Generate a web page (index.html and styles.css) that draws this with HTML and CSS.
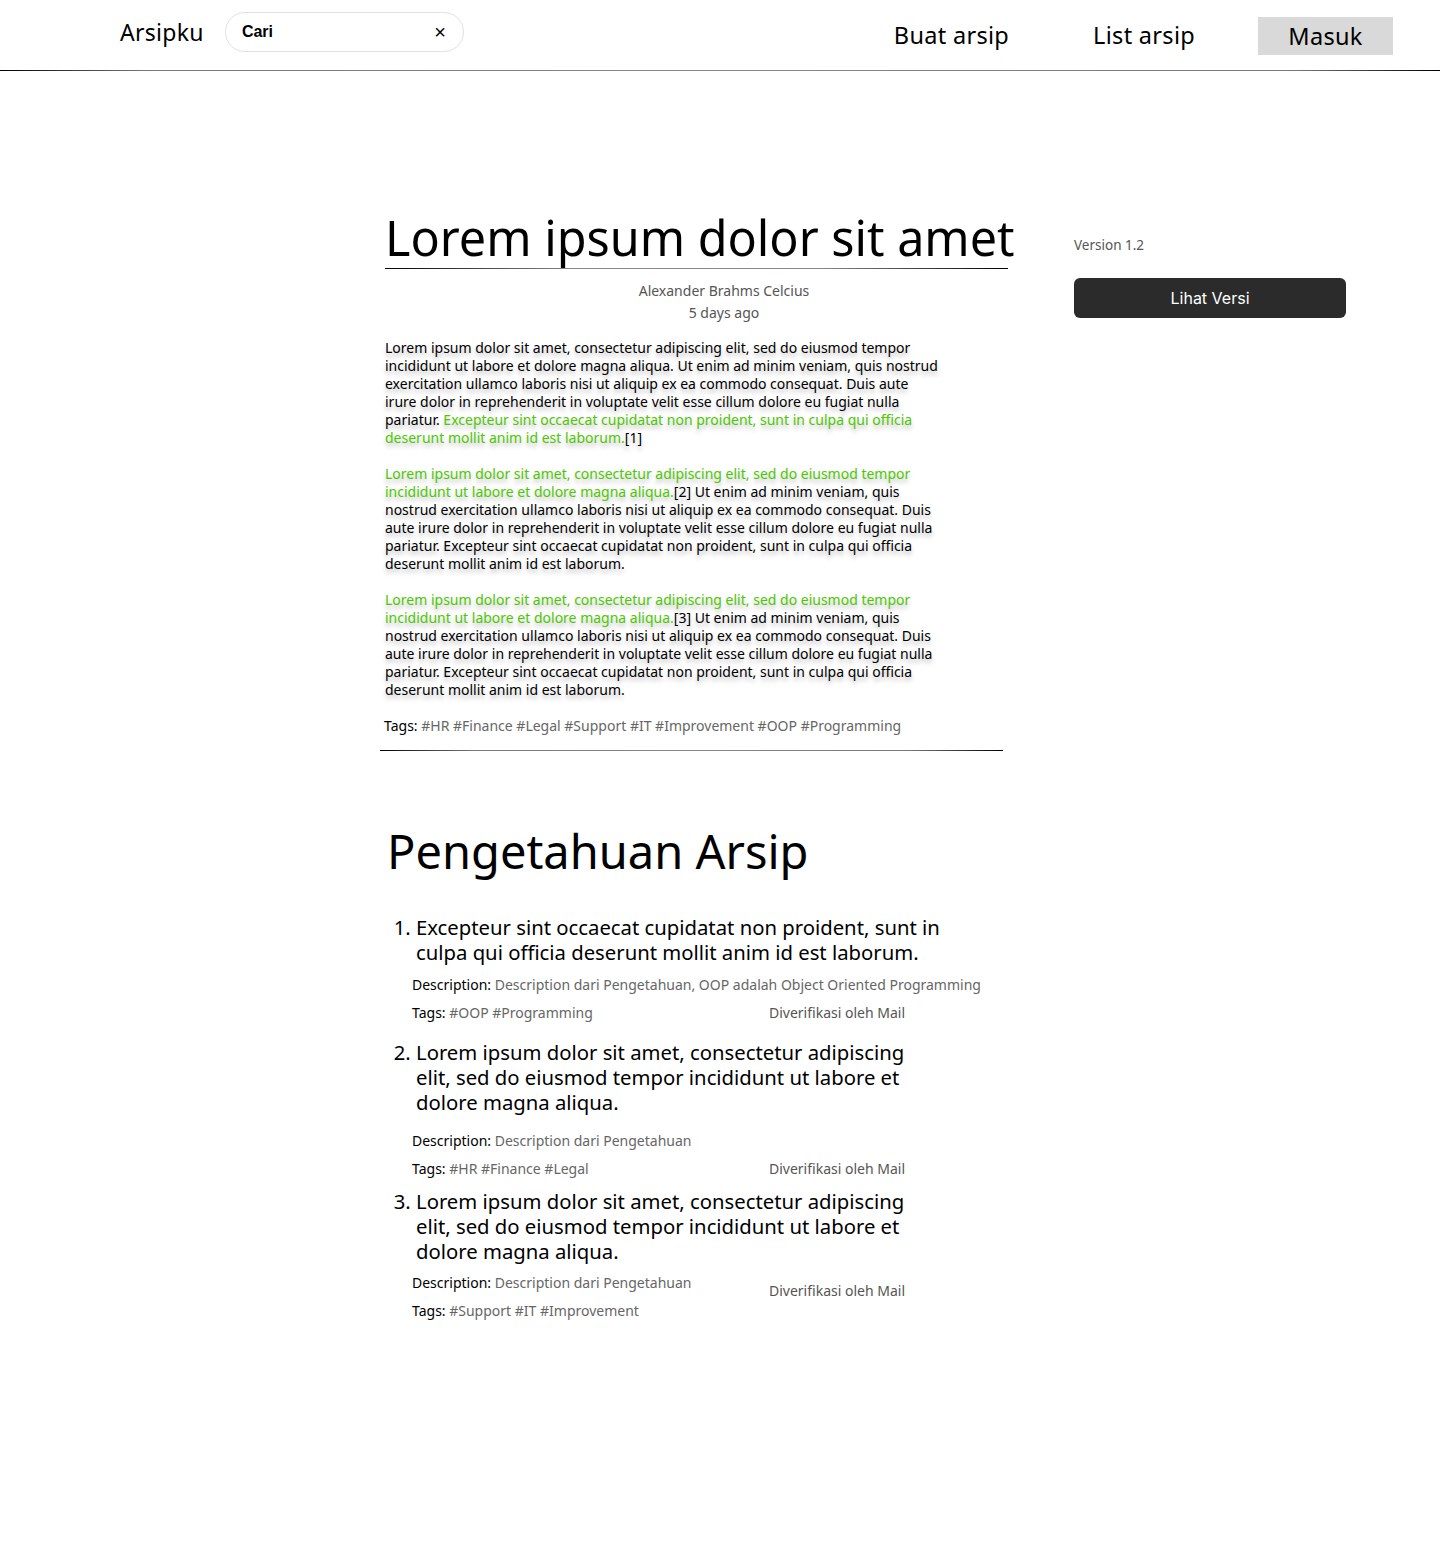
FILE: index.html
```html
<!DOCTYPE html>
<html lang="id">
<head>
<meta charset="utf-8">
<title>Arsipku</title>
<link rel="stylesheet" href="styles.css">
</head>
<body>
<header class="topbar">
  <div class="brand-group">
    <span class="brand">Arsipku</span>
    <div class="search">
      <span class="search-text">Cari</span>
      <span class="search-clear">×</span>
    </div>
  </div>
  <nav class="nav">
    <a class="nav-link">Buat arsip</a>
    <a class="nav-link">List arsip</a>
    <a class="nav-btn">Masuk</a>
  </nav>
</header>

<main class="page">
  <article class="article">
    <h1 class="title">Lorem ipsum dolor sit amet</h1>
    <div class="meta">
      <div>Alexander Brahms Celcius</div>
      <div>5 days ago</div>
    </div>
    <div class="body">
      <p>Lorem ipsum dolor sit amet, consectetur adipiscing elit, sed do eiusmod tempor incididunt ut labore et dolore magna aliqua. Ut enim ad minim veniam, quis nostrud exercitation ullamco laboris nisi ut aliquip ex ea commodo consequat. Duis aute irure dolor in reprehenderit in voluptate velit esse cillum dolore eu fugiat nulla pariatur. <span class="hl">Excepteur sint occaecat cupidatat non proident, sunt in culpa qui officia deserunt mollit anim id est laborum.</span>[1]</p>
      <p><span class="hl">Lorem ipsum dolor sit amet, consectetur adipiscing elit, sed do eiusmod tempor incididunt ut labore et dolore magna aliqua.</span>[2] Ut enim ad minim veniam, quis nostrud exercitation ullamco laboris nisi ut aliquip ex ea commodo consequat. Duis aute irure dolor in reprehenderit in voluptate velit esse cillum dolore eu fugiat nulla pariatur. Excepteur sint occaecat cupidatat non proident, sunt in culpa qui officia deserunt mollit anim id est laborum.</p>
      <p><span class="hl">Lorem ipsum dolor sit amet, consectetur adipiscing elit, sed do eiusmod tempor incididunt ut labore et dolore magna aliqua.</span>[3] Ut enim ad minim veniam, quis nostrud exercitation ullamco laboris nisi ut aliquip ex ea commodo consequat. Duis aute irure dolor in reprehenderit in voluptate velit esse cillum dolore eu fugiat nulla pariatur. Excepteur sint occaecat cupidatat non proident, sunt in culpa qui officia deserunt mollit anim id est laborum.</p>
    </div>
    <div class="tags">Tags: <span class="muted">#HR #Finance #Legal #Support #IT #Improvement #OOP #Programming</span></div>
    <div class="rule"></div>

    <section class="knowledge">
      <h2 class="k-title">Pengetahuan Arsip</h2>
      <ol class="k-list">
        <li class="k-item first">
          <div class="k-text">Excepteur sint occaecat cupidatat non proident, sunt in culpa qui officia deserunt mollit anim id est laborum.</div>
          <div class="k-desc">Description: <span class="muted">Description dari Pengetahuan, OOP adalah Object Oriented Programming</span></div>
          <div class="k-row">
            <span class="k-tags">Tags: <span class="muted">#OOP #Programming</span></span>
            <span class="k-ver">Diverifikasi oleh Mail</span>
          </div>
        </li>
        <li class="k-item second">
          <div class="k-text narrow">Lorem ipsum dolor sit amet, consectetur adipiscing elit, sed do eiusmod tempor incididunt ut labore et dolore magna aliqua.</div>
          <div class="k-desc spaced">Description: <span class="muted">Description dari Pengetahuan</span></div>
          <div class="k-row">
            <span class="k-tags">Tags: <span class="muted">#HR #Finance #Legal</span></span>
            <span class="k-ver">Diverifikasi oleh Mail</span>
          </div>
        </li>
        <li class="k-item">
          <div class="k-text narrow">Lorem ipsum dolor sit amet, consectetur adipiscing elit, sed do eiusmod tempor incididunt ut labore et dolore magna aliqua.</div>
          <div class="k-split">
            <div class="k-left">
              <div class="k-desc">Description: <span class="muted">Description dari Pengetahuan</span></div>
              <div class="k-tags">Tags: <span class="muted">#Support #IT #Improvement</span></div>
            </div>
            <span class="k-ver mid">Diverifikasi oleh Mail</span>
          </div>
        </li>
      </ol>
    </section>
  </article>

  <aside class="side">
    <div class="version">Version 1.2</div>
    <button class="btn-dark">Lihat Versi</button>
  </aside>
</main>
</body>
</html>
```

FILE: styles.css
```css
* { box-sizing: border-box; }
html, body { margin: 0; padding: 0; background: #fff; }
body {
  font-family: "Noto Sans", "DejaVu Sans", sans-serif;
  color: #000;
  width: 1440px;
  min-height: 1559px;
}

.topbar {
  height: 71px;
  display: flex;
  align-items: flex-start;
  justify-content: space-between;
  padding: 0 47px 0 120px;
  position: relative;
}
.topbar::after {
  content: "";
  position: absolute;
  left: 0; right: 0; bottom: 0;
  height: 1px;
  background: linear-gradient(90deg, #000 0%, #777 10%, #888 50%, #777 90%, #000 100%);
}
.brand-group { display: flex; align-items: center; gap: 21px; height: 64px; }
.brand { font-size: 23px; letter-spacing: 0.3px; }
.search {
  width: 239px;
  height: 40px;
  border: 1px solid #e1e1e1;
  border-radius: 20px;
  display: flex;
  align-items: center;
  justify-content: space-between;
  padding: 0 17px 0 16px;
}
.search-text { font-family: "Liberation Sans", Arial, sans-serif; font-weight: 700; font-size: 16px; }
.search-clear { font-family: "Liberation Sans", Arial, sans-serif; font-size: 20px; line-height: 1; }

.nav { display: flex; align-items: center; height: 70px; }
.nav-link { font-size: 23.5px; letter-spacing: 0.3px; }
.nav-link:first-child { margin-right: 84px; }
.nav-link:nth-child(2) { margin-right: 63px; }
.nav-btn {
  font-size: 23.5px;
  background: #d9d9d9;
  width: 135px;
  height: 38px;
  display: flex;
  align-items: center;
  justify-content: center;
  margin-top: 2px;
  letter-spacing: 0.3px;
}

.page {
  display: flex;
  align-items: flex-start;
  padding-left: 380px;
  padding-top: 137px;
}
.article { width: 628px; }
.title {
  font-size: 48.5px;
  font-weight: 400;
  margin: 0 0 0 5px;
  line-height: 58px;
  padding-bottom: 2px;
  border-bottom: 1px solid #000;
  border-image: linear-gradient(90deg, #000 0%, #888 30%, #888 70%, #000 100%) 1;
  width: 623px;
  white-space: nowrap;
}
.meta {
  text-align: center;
  color: #555;
  font-size: 14px;
  line-height: 22px;
  margin-top: 11px;
  padding-left: 60px;
}
.body {
  margin-top: 15px;
  margin-left: 5px;
  width: 556px;
  font-size: 14px;
  line-height: 18px;
  text-shadow: 0 4px 4px rgba(0,0,0,0.25);
}
.body p { margin: 0 0 18px 0; }
.body p:last-child { margin-bottom: 0; }
.hl { color: #4cc800; }
.tags {
  font-size: 14px;
  margin: 18px 0 0 4px;
  line-height: 18px;
}
.muted { color: #666; }
.rule {
  margin-top: 15px;
  height: 1px;
  width: 623px;
  background: linear-gradient(90deg, #000 0%, #777 15%, #888 50%, #777 85%, #000 100%);
}

.knowledge { margin-top: 70px; padding-left: 7px; }
.k-title {
  font-size: 47px;
  font-weight: 400;
  margin: 0;
  line-height: 60px;
}
.k-list {
  margin: 32px 0 0 0;
  padding-left: 29px;
  font-size: 20.3px;
}
.k-item.first { margin-bottom: 16px; }
.k-item.second { margin-bottom: 9px; }
.k-text { line-height: 25px; width: 540px; }
.k-text.narrow { width: 500px; }
.k-desc, .k-tags, .k-ver { font-size: 14px; line-height: 18px; }
.k-desc { margin: 11px 0 0 -4px; }
.k-desc.spaced { margin-top: 17px; }
.k-row { display: flex; margin: 10px 0 0 -4px; }
.k-row .k-tags { width: 357px; }
.k-ver { color: #555; }
.k-split { display: flex; align-items: center; margin-left: -4px; }
.k-split .k-desc { margin: 10px 0 0 0; }
.k-split .k-tags { margin-top: 10px; }
.k-left { width: 357px; }
.k-ver.mid { margin-top: -2px; }

.side { margin-left: 66px; padding-top: 28px; width: 272px; }
.version { font-size: 13.5px; color: #555; line-height: 18px; }
.btn-dark {
  margin-top: 24px;
  width: 272px;
  height: 40px;
  border: none;
  border-radius: 6px;
  background: #2b2b2b;
  color: #fff;
  font-family: "Inter", "Liberation Sans", sans-serif;
  font-size: 16px;
}
```
